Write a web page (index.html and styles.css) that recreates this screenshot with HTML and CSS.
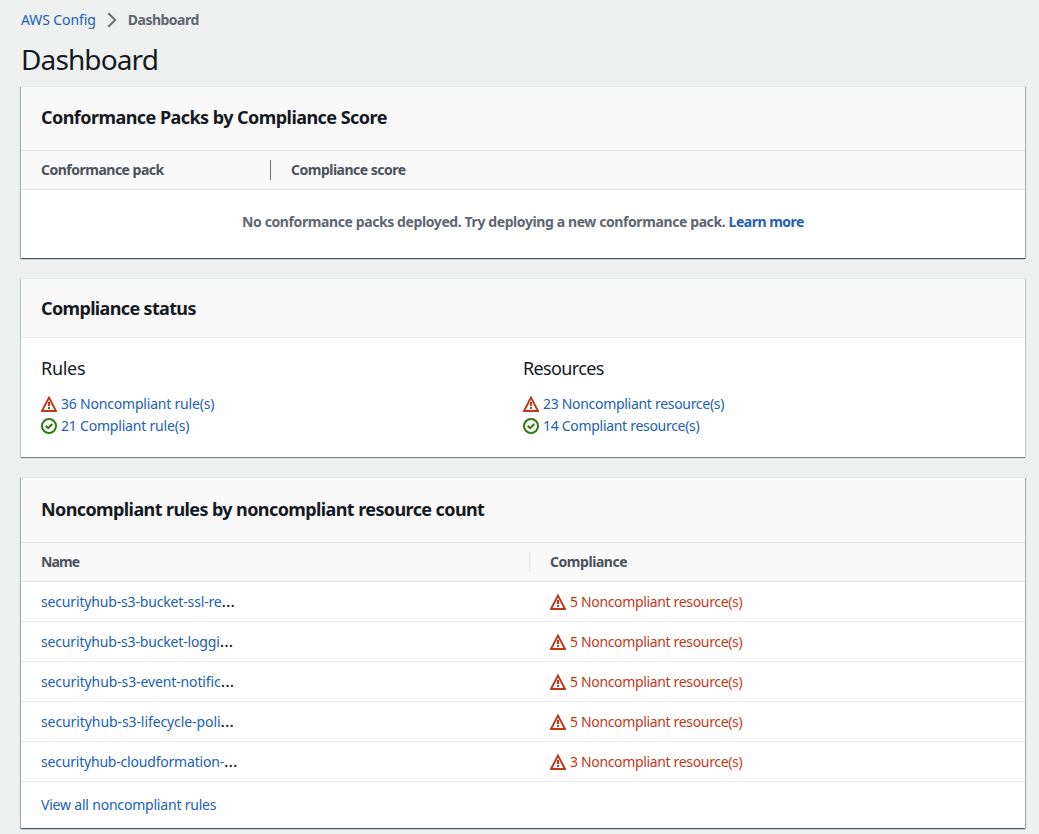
FILE: index.html
```html
<!DOCTYPE html>
<html lang="en">
<head>
<meta charset="utf-8">
<title>AWS Config Dashboard</title>
<link rel="stylesheet" href="styles.css">
</head>
<body>
<svg class="defs" width="0" height="0" aria-hidden="true">
  <symbol id="warn" viewBox="0 0 16 16"><path d="M8 1.6 15 15H1z" fill="none" stroke="currentColor" stroke-width="2"/><path d="M8 6v4M8 11v2" fill="none" stroke="currentColor" stroke-width="2"/></symbol>
  <symbol id="ok" viewBox="0 0 16 16"><circle cx="8" cy="8" r="7" fill="none" stroke="currentColor" stroke-width="2"/><path d="M4.7 7.7 7.2 10.2 11.3 6" fill="none" stroke="currentColor" stroke-width="2"/></symbol>
</svg>
<nav class="crumbs">
  <a class="t-crumb">AWS Config</a>
  <svg class="chevron" width="10" height="16" viewBox="0 0 10 16"><path d="M1.3 1.3 8.2 8 1.3 14.7" fill="none" stroke="#687078" stroke-width="2"/></svg>
  <b class="t-here">Dashboard</b>
</nav>
<h1><span class="t-title">Dashboard</span></h1>
<main>
<section class="card packs">
  <h2><span class="t-packs">Conformance Packs by Compliance Score</span></h2>
  <div class="cols"><b class="first"><span class="t-pack">Conformance pack</span></b><b><span class="t-pack">Compliance score</span></b></div>
  <p class="empty"><span class="t-empty">No conformance packs deployed. Try deploying a new conformance pack.</span> <a class="t-learn">Learn more</a></p>
</section>
<section class="card status">
  <h2><span class="t-status">Compliance status</span></h2>
  <div class="groups">
    <div class="group">
      <h3><span class="t-rules">Rules</span></h3>
      <div class="stat"><svg class="bad"><use href="#warn"/></svg><a class="t-rule">36 Noncompliant rule(s)</a></div>
      <div class="stat"><svg class="good"><use href="#ok"/></svg><a class="t-rule">21 Compliant rule(s)</a></div>
    </div>
    <div class="group">
      <h3><span class="t-res">Resources</span></h3>
      <div class="stat"><svg class="bad"><use href="#warn"/></svg><a>23 Noncompliant resource(s)</a></div>
      <div class="stat"><svg class="good"><use href="#ok"/></svg><a>14 Compliant resource(s)</a></div>
    </div>
  </div>
</section>
<section class="card rules">
  <h2><span class="t-count">Noncompliant rules by noncompliant resource count</span></h2>
  <div class="cols"><b class="first"><span class="t-name">Name</span></b><b><span class="t-comp">Compliance</span></b></div>
  <div class="row"><div class="name"><a class="t-n1">securityhub-s3-bucket-ssl-re</a><span class="dots">…</span></div><div class="stat bad"><svg><use href="#warn"/></svg><span class="t-bad">5 Noncompliant resource(s)</span></div></div>
  <div class="row"><div class="name"><a class="t-n2">securityhub-s3-bucket-loggi</a><span class="dots">…</span></div><div class="stat bad"><svg><use href="#warn"/></svg><span class="t-bad">5 Noncompliant resource(s)</span></div></div>
  <div class="row"><div class="name"><a class="t-n3">securityhub-s3-event-notific</a><span class="dots">…</span></div><div class="stat bad"><svg><use href="#warn"/></svg><span class="t-bad">5 Noncompliant resource(s)</span></div></div>
  <div class="row"><div class="name"><a class="t-n4">securityhub-s3-lifecycle-poli</a><span class="dots">…</span></div><div class="stat bad"><svg><use href="#warn"/></svg><span class="t-bad">5 Noncompliant resource(s)</span></div></div>
  <div class="row"><div class="name"><a class="t-n5">securityhub-cloudformation-</a><span class="dots">…</span></div><div class="stat bad"><svg><use href="#warn"/></svg><span class="t-bad">3 Noncompliant resource(s)</span></div></div>
  <div class="more"><a class="t-view">View all noncompliant rules</a></div>
</section>
</main>
</body>
</html>
```
FILE: styles.css
```css
* { box-sizing: border-box; }
body { margin: 0; height: 834px; overflow: hidden; background: #eff1f1; color: #16191f; font: 14px/20px "Noto Sans", sans-serif; letter-spacing: -0.3px; white-space: nowrap; }
h1, h2, h3, p { margin: 0; }
a { color: #2160b5; }
b { font-weight: 700; }
.defs { display: block; height: 0; }
.crumbs { display: flex; align-items: center; height: 20px; margin: 10px 0 0 21px; color: #5f6670; }
.chevron { margin: 0 11px; }
h1 { margin: 11px 0 0 21px; height: 36px; font-size: 28px; line-height: 36px; font-weight: 400; }
main { display: flex; flex-direction: column; gap: 20px; margin: 9px 14px 0 21px; }
.card { background: #fff; border-top: 1px solid #e6e9e9; box-shadow: 0 1px 1px 0 rgba(0,28,36,.5), 1px 1px 1px 0 rgba(0,28,36,.25), -1px 1px 1px 0 rgba(0,28,36,.25); }
.packs { height: 172px; }
.status { height: 179px; box-shadow: 0 1px 1px 0 rgba(0,28,36,.3), 1px 1px 1px 0 rgba(0,28,36,.15), -1px 1px 1px 0 rgba(0,28,36,.15); }
.rules { height: 351px; }
h2 { height: 64px; padding: 0 20px; background: #f9f9f9; font-size: 18px; line-height: 62px; font-weight: 700; }
.packs h2 { height: 63px; line-height: 60px; }
.status h2 { height: 59px; line-height: 59px; border-bottom: 1px solid #e6e8e8; }
.cols { display: flex; align-items: center; height: 40px; padding-left: 20px; background: #f9f9f9; border: solid #e6e8e8; border-width: 1px 0; color: #4b525c; }
.cols .first { width: 230px; margin-right: 20px; border-right: 1px solid #687078; }
.rules .cols .first { width: 489px; border-color: #e3e6e6; }
.empty { padding-top: 22px; text-align: center; font-weight: 700; color: #5f6670; }
.groups { display: grid; grid-template-columns: 482px 1fr; padding: 19px 20px 0; }
h3 { height: 24px; margin-bottom: 12px; font-size: 18px; line-height: 22px; font-weight: 400; }
.stat { display: flex; align-items: center; gap: 4px; height: 22px; }
.stat svg { width: 16px; height: 16px; flex: none; }
.bad { color: #c0391b; }
.good { color: #2b7d12; }
.row { display: flex; align-items: center; height: 40px; padding-left: 20px; border-bottom: 1px solid #e8eaea; }
.name { width: 509px; }
.dots { font-size: 17px; line-height: 1; }
.more { padding: 13px 20px 0; }

/* Tracking per label */
.t-crumb { letter-spacing: -0.1px; }
.t-here { letter-spacing: -0.5px; }
.t-title { letter-spacing: -0.88px; }
.t-packs { letter-spacing: -0.55px; }
.t-pack { letter-spacing: -0.5px; }
.t-empty { letter-spacing: -0.4px; }
.t-learn { letter-spacing: -0.5px; }
.t-status { letter-spacing: -0.65px; }
.t-res { letter-spacing: -0.63px; }
.t-rule { letter-spacing: -0.2px; }
.t-count { letter-spacing: -0.6px; }
.t-name { letter-spacing: -0.9px; }
.t-comp { letter-spacing: -0.45px; }
.t-bad { letter-spacing: -0.34px; }
.t-n1, .t-n2 { letter-spacing: -0.16px; }
.t-n3 { letter-spacing: -0.12px; }
.t-n4 { letter-spacing: -0.09px; }
.t-n5, .t-view { letter-spacing: -0.2px; }
```
